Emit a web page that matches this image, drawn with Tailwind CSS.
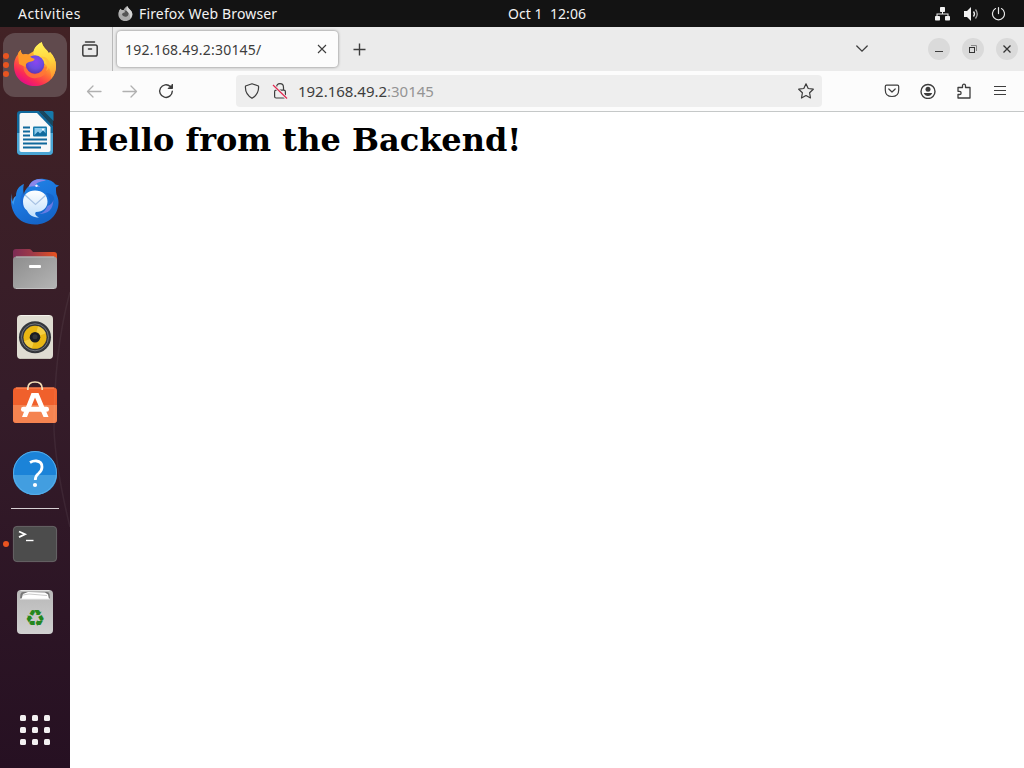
<!DOCTYPE html>
<html lang="en">
<head>
<meta charset="utf-8">
<title>192.168.49.2:30145/</title>
<script src="https://cdn.jsdelivr.net/npm/@tailwindcss/browser@4"></script>
</head>
<body class="w-[1024px] h-[768px] overflow-hidden flex flex-col bg-white font-['Noto_Sans','Open_Sans',sans-serif] text-[14px]">
<!-- Top panel -->
<header class="h-[27px] shrink-0 bg-[#131313] text-[#f2f2f2] grid grid-cols-[508px_1fr_89px] items-center leading-[27px] whitespace-pre">
  <div class="flex items-center pl-[18px]">
    <span class="w-[100px] tracking-[0.45px]">Activities</span>
    <svg class="w-[15px] h-[15px] mr-[6px]" viewBox="11 9 43 45">
      <path fill="#aaa" d="M11 33c0-6 2-9 5-12l1-4 4 4 6 0c2-6 6-9 11-12 1 5 5 7 9 12 4 4 6 8 6 14 0 11-9 19-21 19S11 46 11 33Z"/>
      <path fill="#555" d="M22 32c0-7 7-11 13-9 6 1 8 7 6 12-2 6-9 8-14 5-3-2-5-5-5-8Z"/><path fill="#d6d6d6" d="M38 9c1 5 5 7 9 12 4 4 6 8 6 14-2 6-4 9-7 11 2-8-2-14-6-18-6-5-5-12-2-19Z"/><path fill="#b5b5b5" d="M13 24l4-7 4 4 6 1 5 5-7 3-4 4-8-3Z"/>
    </svg>
    <span class="tracking-[0.15px]">Firefox Web Browser</span>
  </div>
  <div class="tracking-[0.05px]">Oct 1  12:06</div>
  <div class="flex items-center gap-[13px]">
    <svg class="w-[16px] h-[14px]" viewBox="0 0 16 14" fill="#f2f2f2"><rect x="5" y="0" width="5" height="5" rx=".7"/><rect x="0" y="9" width="5" height="4.500" rx=".7"/><rect x="10" y="9" width="5" height="4.500" rx=".7"/><path d="M7 4h1v2.500h5.500V9h-1V7.500h-10V9h-1V6.500H7Z"/></svg>
    <svg class="w-[16px] h-[14px]" viewBox="0 0 16 14"><path fill="#f2f2f2" d="M0 4h3l4-4v14l-4-4H0Z"/><path d="M9.500 4.500q2 2.500 0 5" fill="none" stroke="#f2f2f2" stroke-width="1.300"/><path d="M11.500 2.500q3.500 4.500 0 9" fill="none" stroke="#aaa" stroke-width="1.300"/></svg>
    <svg class="-ml-[2px] w-[14px] h-[14px]" viewBox="0 0 14 14" fill="none" stroke="#e8e8e8" stroke-width="1.200" stroke-linecap="round"><path d="M7.500 .6v6M4.500 1.600a6 6 0 1 0 6 0"/></svg>
  </div>
</header>
<div class="flex flex-1 min-h-0">
  <!-- Dock -->
  <nav class="relative w-[70px] shrink-0 flex flex-col items-center gap-1 pt-[6px] bg-linear-to-b from-[#422225] via-[#351c29] via-[50%] to-[#261022]">
    <svg class="absolute inset-0 w-[70px] h-[741px]" viewBox="0 27 70 741" fill="none"><path d="M70 292Q54 350 54 430Q56 470 70 527" stroke="#fff" stroke-opacity=".06" stroke-width="1.500"/></svg>
    <div class="relative w-16 h-16 rounded-[12px] bg-[#604a4d]">
      <svg class="w-16 h-16" viewBox="0 0 64 64">
        <defs>
          <linearGradient id="ffBody" x1=".8" y1=".05" x2=".25" y2=".95"><stop offset="0" stop-color="#ffe84a"/><stop offset=".35" stop-color="#ffb42e"/><stop offset=".6" stop-color="#ff6a36"/><stop offset=".82" stop-color="#fb2b55"/><stop offset="1" stop-color="#e50e86"/></linearGradient>
          <radialGradient id="ffGlobe" cx=".55" cy=".35" r=".75"><stop offset="0" stop-color="#8b45f0"/><stop offset=".5" stop-color="#6a4be0"/><stop offset="1" stop-color="#5a2fa5"/></radialGradient>
          <linearGradient id="ffTail" x1=".5" y1="0" x2=".6" y2="1"><stop offset="0" stop-color="#fff25a"/><stop offset=".5" stop-color="#ffd43c"/><stop offset="1" stop-color="#ff9030"/></linearGradient>
        </defs>
        <path fill="url(#ffBody)" d="M11 33c0-6 2-9 4-12 .5-2 1.500-3 3-4-.3 2 .5 3.500 2 4.500 2-.7 3.500-.7 5 0C28 20 29.500 19 31 18c1-4 4-7 7.700-9 .8 4 3 6 5.300 8.500 1 .9 1.500 2 1.800 3l1.200-1.500C51 23 53 28 53 33c0 12-9.500 20-21 20S11 45 11 33Z"/>
        <path fill="url(#ffTail)" d="M38.700 9.300c1 4 3 6 5.300 8.200 1 .9 1.500 2 1.800 3l1.200-1.500C51 23 53 28 53 33c0 5-1.800 9.500-5 13 1-9-3-13-7-15.500-6-4-11-7-10.500-11.500C31 14.500 35 11 38.700 9.300Z"/>
        <path fill="none" stroke="#ff7a35" stroke-width="4" d="M23 31c-2 8 4 13 10 12 6-.5 9-4 10-9" opacity=".75"/>
        <circle cx="32" cy="31.500" r="9.300" fill="url(#ffGlobe)"/>
        <path fill="#ff9a2a" d="M15 21c.5-2 1.500-3 3-4-.3 2 .5 3.500 2 4.500 3-.7 4.500-.3 6 1 1 1.500 3 3 5.500 3.200.3 2-2.500 2.800-5.500 3.300-2.500.7-3.500 2.500-3.500 5L16 31Z"/>
        <path fill="#ffbd39" opacity=".75" d="M37 24c6 2 9 7 6 14 3-2 5-6 3-10s-5-5-9-4Z"/>
      </svg>
      <div class="absolute left-0 top-[20px] flex flex-col gap-[3px]"><i class="w-[6px] h-[6px] rounded-full bg-[#e95420]"></i><i class="w-[6px] h-[6px] rounded-full bg-[#e95420]"></i><i class="w-[6px] h-[6px] rounded-full bg-[#e95420]"></i></div>
    </div>
    <svg class="w-16 h-16 shrink-0" viewBox="0 0 64 64">
      <path fill="#11699c" d="M17 10h19L50 25v25q0 4-4 4H18q-4 0-4-4V13q0-3 3-3Z"/><path fill="#4aa5d4" d="M14 32h36v18q0 4-4 4H18q-4 0-4-4Z"/>
      <path fill="#f9f9f9" d="M18.500 12H34L47.500 26V49q0 2-2 2h-27q-2 0-2-2V14q0-2 2-2Z"/>
      <path fill="#174861" d="M36 10 50 25v-6L40 10Z"/><path fill="#1679aa" d="M40.500 10H49q1.500 0 1.500 1.500V20Z"/>
      <path stroke="#11699c" stroke-width="1.900" d="M20 26.500h7M20 30.500h7M20 34.500h7M20 38.500h24M20 42.500h24M20 46.500h18"/><rect x="30" y="25.500" width="14" height="10" rx="1" fill="#1679aa"/><rect x="31.500" y="27" width="11" height="7" fill="#8bc9ea"/><path fill="#11699c" d="m31 34.500 4-4 2 2 3-3 3 3v2Z"/><circle cx="40" cy="28.500" r="1" fill="#fff"/>
    </svg>
    <svg class="w-16 h-16 shrink-0" viewBox="0 0 64 64">
      <defs><linearGradient id="tb" x1="0" y1="0" x2=".5" y2="1"><stop offset="0" stop-color="#2387e6"/><stop offset=".6" stop-color="#1a74dc"/><stop offset="1" stop-color="#1565c8"/></linearGradient><linearGradient id="tbMail" x1="0" y1="0" x2="0" y2="1"><stop offset="0" stop-color="#fff"/><stop offset="1" stop-color="#bfdefb"/></linearGradient></defs>
      <path fill="url(#tb)" d="M8.500 23.500c-3 18 6 32 23.500 32 14 0 23.500-10 23.500-22 0-3-.8-6-2-8-.5-2-.5-5-.5-7l3-2-3.500-1c-2-3-6-5-11.500-5.500C33 9 28 12 26 17c-3 3-5 5-5 9-1-3-1-8 0-11-5 2-8 6-8 12-2 1-3 3-3 6-2-3-2-6-1.500-9.500Z"/>
      <path fill="#6cc4ff" d="M9 24c-1 5-.5 9 1.500 12 .5-4 1.500-6 2.500-9-2 1-3 3-3 6-.8-2-1-5-1-9Z" opacity=".45"/>
      <path fill="#1d62cf" d="M21 26c-2 5 1 9 0 14-4-4-5-11-1-17Z" opacity=".6"/>
      <path fill="#8a86ea" d="M25.500 18C29 9 38 9 43 12c-6 0-9 2-11 4 3 0 4 .5 5 2-4-1-8-1-11.500 0Z"/><circle cx="33.500" cy="16.800" r="1.200" fill="#e8f3ff"/>
      <path fill="#1259c0" d="M43 24c5 5 5 12 1 16 5-1 8-6 7-12-2-3-5-4-8-4Z" opacity=".5"/>
      <path fill="#7b7fe8" d="M36 45c4-1 7-4 8.500-8 3-1 5-3 6-6-.5 9-5 14-14.500 14Z" opacity=".8"/>
      <path fill="url(#tbMail)" d="M32 21.500c7.500 0 12.500 4.500 12.500 11 0 6-4.500 10.500-11.500 10.500-1.500 1-1 3.500 3 5.500-6 0-10-2.500-12-7-3-2-4-5-4-9 0-6.500 5-11 12-11Z"/><path d="m22 26 10.500 9.500L43 26" fill="none" stroke="#a9c3e4" stroke-width="1.200"/>
    </svg>
    <svg class="w-16 h-16 shrink-0" viewBox="0 0 64 64">
      <defs><linearGradient id="fold"><stop stop-color="#7c2c55"/><stop offset=".45" stop-color="#a03a48"/><stop offset="1" stop-color="#e95420"/></linearGradient><linearGradient id="fGray" x1="0" y1="0" x2="1" y2="1"><stop stop-color="#8d8d8d"/><stop offset="1" stop-color="#b5b5b5"/></linearGradient></defs>
      <path fill="url(#fold)" d="M13 12h13q1.500 0 2.500 1.200l1.500 1.800h21q3 0 3 3V30H10V15q0-3 3-3Z"/>
      <rect x="10" y="19.500" width="44" height="32.500" rx="3.500" fill="url(#fGray)"/><path d="M13 20h38" stroke="#bbb"/><path d="M13 51.500h38" stroke="#ccc" opacity=".7"/><rect x="26" y="28" width="12" height="3" rx="1" fill="#fff"/>
    </svg>
    <svg class="w-16 h-16 shrink-0" viewBox="0 0 64 64">
      <rect x="14" y="10" width="36" height="44" rx="4" fill="#dfdcd2"/><path d="M17.500 10.500h29" stroke="#f4f2ec"/><path d="M17.500 53.500h29" stroke="#c6c3b8"/>
      <circle cx="32" cy="32.300" r="16" fill="#34363b"/><circle cx="32" cy="32.300" r="13.500" fill="none" stroke="#75787d" stroke-width="1"/><circle cx="32" cy="32.300" r="11.500" fill="#e9b613"/><path fill="#f8d858" d="m32 32.300 3-11q6 2 8 7Zm0 0-3 11q-6-2-8-7Z" opacity=".7"/><circle cx="32" cy="32.300" r="5.300" fill="#1c1d22"/><circle cx="32" cy="31.800" r="2.500" fill="#34363b"/>
    </svg>
    <svg class="w-16 h-16 shrink-0" viewBox="0 0 64 64">
      <rect x="10" y="14.500" width="44" height="35.500" rx="3.500" fill="#f0602c"/><path fill="#f58350" d="M10 32h44v14.500q0 3.500-3.500 3.500h-37Q10 50 10 46.500Z"/><path d="M13 15h38" stroke="#ff8d5c"/>
      <path d="M24.800 17v-1.500q0-6.500 7.200-6.500t7.200 6.500V17" fill="none" stroke="#f4dfb8" stroke-width="1.700"/>
      <path fill="#fff" d="M28.500 20h7L45.500 44H40.500L32 24.500 24 44H19Z"/><rect x="18" y="33.800" width="28" height="5" rx="2.400" fill="#fff"/>
    </svg>
    <svg class="w-16 h-16 shrink-0" viewBox="0 0 64 64">
      <circle cx="32" cy="32" r="22" fill="#1b83d8"/><path fill="#429ee0" d="M10 34h44a22 20 0 0 1-44 0Z"/><circle cx="32" cy="32" r="21.500" fill="none" stroke="#58aee9"/>
      <path d="M27 21.500q3-1.800 6.500-1.500 5.500.5 5.500 6 0 3.500-3.500 6.500Q32.300 35 32.300 39" fill="none" stroke="#fff" stroke-width="2.800"/><circle cx="32" cy="44" r="2.100" fill="#fff"/>
    </svg>
    <div class="w-12 h-px shrink-0 bg-[#d6d0d3] -my-px"></div>
    <div class="relative w-16 h-16 shrink-0">
      <svg class="w-16 h-16" viewBox="0 0 64 64"><rect x="10.400" y="14.400" width="43.200" height="35.200" rx="3.500" fill="#4c4c4c" stroke="#727272" stroke-width=".8"/><path d="m16 19.500 6 2.800-6 2.800" fill="none" stroke="#fff" stroke-width="1.800"/><path d="M23 28.500h7.500" stroke="#fff" stroke-width="1.400"/></svg>
      <i class="absolute left-0 top-[29px] w-[6px] h-[6px] rounded-full bg-[#e95420]"></i>
    </div>
    <svg class="w-16 h-16 shrink-0" viewBox="0 0 64 64">
      <defs><linearGradient id="bin" x1="0" y1="0" x2="0" y2="1"><stop stop-color="#b8b8b8"/><stop offset="1" stop-color="#d0d0d0"/></linearGradient></defs>
      <rect x="14" y="10" width="36" height="44" rx="4" fill="url(#bin)"/><path d="M17.500 10.500h29" stroke="#e0e0e0"/><path fill="#777" d="M20 12h24q2 0 2.500 2l.5 5H17l.5-5q.5-2 2.500-2Z"/><path fill="#fff" d="m20 14 5-2 17 .5 3 2 1 4.500H18.500Z"/><path d="m20 15 6-1 18 1.500" fill="none" stroke="#bbb" stroke-width=".8"/><path d="M17 19h30" stroke="#eee"/>
      <text x="32" y="46" text-anchor="middle" class="font-['DejaVu_Sans',sans-serif] text-[23px]" fill="#24871d">♻</text>
    </svg>
    <div class="mt-auto mb-[23px] grid grid-cols-3 gap-[6px] *:w-[6px] *:h-[6px] *:rounded-[1.5px] *:bg-[#f2f0f1]"><i></i><i></i><i></i><i></i><i></i><i></i><i></i><i></i><i></i></div>
  </nav>
  <!-- Browser window -->
  <main class="flex-1 flex flex-col min-w-0 text-[#3d3d3d]">
    <div class="h-[44px] shrink-0 bg-[#ebebeb] flex items-center">
      <div class="w-[43px] h-full border-r border-[#b9b9b9] flex items-center pl-[12px]">
        <svg class="w-4 h-4" viewBox="0 0 16 16" fill="none" stroke="#3d3d3d" stroke-width="1.500" stroke-linecap="round"><path d="M3.500 1h9"/><rect x=".8" y="4" width="14.400" height="11" rx="1.800"/><path d="M6.500 8h3"/></svg>
      </div>
      <div class="ml-[4px] w-[221px] h-[36px] rounded-[4px] bg-[#fcfcfc] shadow-[0_0_3px_rgba(0,0,0,.5)] flex items-center justify-between pl-[8px] pr-[11px]">
        <span class="tracking-[0.22px]">192.168.49.2:30145/</span>
        <svg class="w-[10px] h-[10px]" viewBox="0 0 10 10" stroke="#3d3d3d" stroke-width="1.100"><path d="m1 1 8 8M9 1 1 9"/></svg>
      </div>
      <svg class="ml-[15px] w-[13px] h-[13px]" viewBox="0 0 13 13" stroke="#3d3d3d" stroke-width="1.400"><path d="M.5 6.500h12M6.500.5v12"/></svg>
      <svg class="ml-auto w-[12px] h-[8px]" viewBox="0 0 12 8" fill="none" stroke="#3d3d3d" stroke-width="1.300" stroke-linecap="round"><path d="m.8 1 5.200 5.200L11.200 1"/></svg>
      <div class="ml-[60px] mr-[6px] flex gap-[12px]">
        <svg class="w-[22px] h-[22px]" viewBox="0 0 22 22"><circle cx="11" cy="11" r="11" fill="#dadada"/><path d="M7 13.500h8" stroke="#3d3d3d"/></svg>
        <svg class="w-[22px] h-[22px]" viewBox="0 0 22 22" fill="none"><circle cx="11" cy="11" r="11" fill="#dadada"/><rect x="7.500" y="9.500" width="5" height="5" stroke="#333"/><path d="M9 7.500h5.500V13" stroke="#888"/></svg>
        <svg class="w-[22px] h-[22px]" viewBox="0 0 22 22"><circle cx="11" cy="11" r="11" fill="#dadada"/><path d="m7.500 7.500 7 7m0-7-7 7" stroke="#333" stroke-width="1.300"/></svg>
      </div>
    </div>
    <div class="h-[41px] shrink-0 bg-[#fcfcfc] border-b border-[#c5c8c8] flex items-center pl-[16px] pr-[16px]">
      <svg class="w-4 h-4" viewBox="0 0 16 16" fill="none" stroke="#b0b0b0" stroke-width="1.300" stroke-linecap="round" stroke-linejoin="round"><path d="M15 8.500H1.500M7 3 1.500 8.500 7 14"/></svg>
      <svg class="ml-[20px] w-4 h-4" viewBox="0 0 16 16" fill="none" stroke="#b0b0b0" stroke-width="1.300" stroke-linecap="round" stroke-linejoin="round"><path d="M1 8.500h13.500M9 3 14.500 8.500 9 14"/></svg>
      <svg class="ml-[20px] w-4 h-4" viewBox="0 0 16 16" fill="none" stroke="#3d3d3d" stroke-width="1.400" stroke-linecap="round"><path d="M14.300 8.300A6.300 6.300 0 1 1 12.300 3.500l1.300 1.300"/><path d="M14.500 1.500v4h-4Z" fill="#3d3d3d" stroke-width="1" stroke-linejoin="round"/></svg>
      <div class="ml-[62px] w-[586px] h-8 rounded-[4px] bg-[#eeeeee] flex items-center pl-[8px] pr-[8px]">
        <svg class="w-4 h-4" viewBox="0 0 16 16" fill="none" stroke="#3d3d3d" stroke-width="1.200" stroke-linejoin="round"><path d="M8 .8 14.500 3q.8 8-6.500 12.300Q.7 11 1.500 3Z"/></svg>
        <svg class="ml-[12px] w-4 h-4" viewBox="0 0 16 16" fill="none" stroke="#3d3d3d" stroke-width="1.200"><rect x="2.600" y="7.200" width="10.800" height="7.800" rx="1.500"/><path d="M4.500 7V4.500q0-3.800 3.500-3.800t3.500 3.800V7"/><path d="m1 2 14 13.500" stroke="#eee" stroke-width="3"/><path d="M1 2 15 15.500" stroke="#e22850" stroke-width="1.200"/></svg>
        <span class="ml-[10px] text-[15px] tracking-[-0.02px]">192.168.49.2<span class="text-[#949494]">:30145</span></span>
        <svg class="ml-auto w-4 h-4" viewBox="0 0 16 16" fill="none" stroke="#3d3d3d" stroke-width="1.200" stroke-linejoin="round"><path d="m8 .8 2.200 4.700 5.100.7-3.700 3.600.9 5.200L8 12.500 3.500 15l.9-5.200L.7 6.200l5.100-.7Z"/></svg>
      </div>
      <div class="ml-auto flex gap-[20px]">
        <svg class="-ml-px w-4 h-4" viewBox="0 0 16 16" fill="none" stroke="#3d3d3d" stroke-width="1.200" stroke-linecap="round" stroke-linejoin="round"><path d="M2.500 2.200h11q1.200 0 1.200 1.200V7q0 6.500-6.700 6.500T1.300 7V3.400q0-1.200 1.200-1.200Z"/><path d="M4.800 6 8 9l3.200-3"/></svg>
        <svg class="w-4 h-4" viewBox="0 0 16 16"><circle cx="8" cy="8.500" r="7" fill="none" stroke="#3d3d3d" stroke-width="1.400"/><circle cx="8" cy="6.300" r="2.500" fill="#3d3d3d"/><path fill="#3d3d3d" d="M3.800 10h8.400q-1 3-4.200 3t-4.200-3Z"/></svg>
        <svg class="w-4 h-4" viewBox="0 0 16 16" fill="none" stroke="#3d3d3d" stroke-width="1.300" stroke-linejoin="round"><path d="M2 15V11.500h1.500a1.600 1.600 0 0 0 0-3.200H2V4.500h4.500V2.700a1.500 1.500 0 0 1 3 0v1.800h4.500V15Z"/></svg>
        <svg class="w-4 h-4" viewBox="0 0 16 16" stroke="#3d3d3d" stroke-width="1.200"><path d="M2 3.500h12M2 7.500h12M2 11.500h12"/></svg>
      </div>
    </div>
    <section class="flex-1 bg-white px-[8px] pt-[9px] text-black">
      <h1 class="font-['DejaVu_Serif',serif] font-bold text-[32px] leading-[38px]">Hello from the Backend!</h1>
    </section>
  </main>
</div>
</body>
</html>
